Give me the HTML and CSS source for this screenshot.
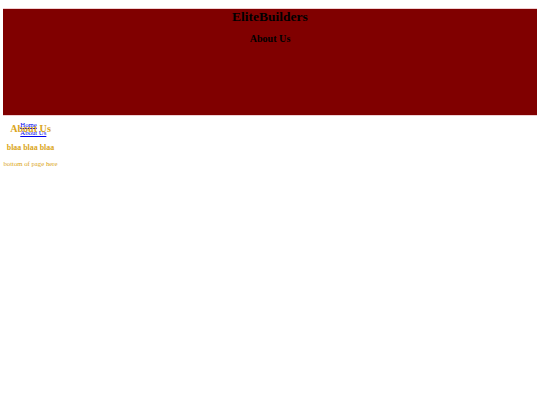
FILE: index.html
```html
<!DOCTYPE html>
<html>
<head>
<meta charset="utf-8">
<title>EliteBuilders</title>
<link rel="stylesheet" href="styles.css">
</head>
<body>
<header class="site-header">
  <h1 class="site-title">EliteBuilders</h1>
  <h2 class="page-title">About Us</h2>
</header>
<nav class="site-nav">
  <ul class="nav-list">
    <li><a href="#">Home</a></li>
    <li><a href="#">About Us</a></li>
  </ul>
</nav>
<main class="content">
  <h2 class="content-title">About Us</h2>
  <h3 class="content-text">blaa blaa blaa</h3>
</main>
<p class="footer-text">bottom of page here</p>
</body>
</html>
```
FILE: styles.css
```css
html {
  background: #ffffff;
}
body {
  margin: 0 3.375px;
  font-family: "Liberation Serif", "Times New Roman", serif;
  font-size: 6.75px;
  line-height: 7.8px;
  color: #000;
  position: relative;
}
.site-header {
  margin: 8.5px 0 0;
  height: 106px;
  background: #800000;
  box-shadow: 0 0 0 0.6px rgba(200, 80, 90, 0.45);
  text-align: center;
}
.site-title {
  margin: 0 0 9px;
  font-size: 13.5px;
  line-height: 15.5px;
  font-weight: bold;
}
.page-title {
  margin: 0;
  font-size: 10.125px;
  line-height: 11.6px;
  font-weight: bold;
}
.site-nav {
  position: absolute;
  z-index: -1;
  left: 16.9px;
  top: 121.25px;
}
.nav-list {
  list-style: none;
  margin: 0;
  padding: 0;
}
.nav-list li {
  line-height: 7.8px;
}
.nav-list a {
  color: #0000ee;
  text-decoration: underline;
}
.content-title {
  margin: 8.4px 0;
  padding-left: 6.75px;
  font-size: 10.125px;
  line-height: 11.6px;
  color: #daa520;
}
.content-text {
  margin: 0 0 7.9px;
  padding-left: 3.4px;
  font-size: 7.9px;
  line-height: 9.1px;
  color: #daa520;
}
.footer-text {
  margin: 0;
  color: #daa520;
}
```
